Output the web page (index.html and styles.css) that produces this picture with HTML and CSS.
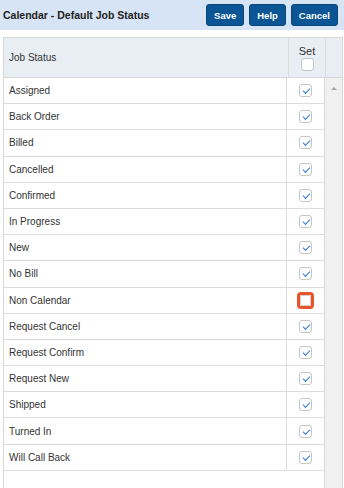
FILE: index.html
```html
<!DOCTYPE html>
<html lang="en">
<head>
    <meta charset="UTF-8">
    <title>Calendar - Default Job Status</title>
    <link rel="stylesheet" href="styles.css">
</head>
<body>

    <div class="toolbar">
        <h1>Calendar - Default Job Status</h1>
        <div class="actions">
            <button class="btn">Save</button>
            <button class="btn">Help</button>
            <button class="btn">Cancel</button>
        </div>
    </div>

    <div class="grid">
        <div class="grid-head">
            <div class="col-name">Job Status</div>
            <div class="col-set">
                <span>Set</span>
                <span class="check"></span>
            </div>
            <div class="col-gutter"></div>
        </div>
        <div class="grid-body">
            <div class="rows">
                <div class="row"><div class="col-name">Assigned</div><div class="col-set"><span class="check on"></span></div></div>
                <div class="row"><div class="col-name">Back Order</div><div class="col-set"><span class="check on"></span></div></div>
                <div class="row"><div class="col-name">Billed</div><div class="col-set"><span class="check on"></span></div></div>
                <div class="row"><div class="col-name">Cancelled</div><div class="col-set"><span class="check on"></span></div></div>
                <div class="row"><div class="col-name">Confirmed</div><div class="col-set"><span class="check on"></span></div></div>
                <div class="row"><div class="col-name">In Progress</div><div class="col-set"><span class="check on"></span></div></div>
                <div class="row"><div class="col-name">New</div><div class="col-set"><span class="check on"></span></div></div>
                <div class="row"><div class="col-name">No Bill</div><div class="col-set"><span class="check on"></span></div></div>
                <div class="row"><div class="col-name">Non Calendar</div><div class="col-set"><span class="check focus"></span></div></div>
                <div class="row"><div class="col-name">Request Cancel</div><div class="col-set"><span class="check on"></span></div></div>
                <div class="row"><div class="col-name">Request Confirm</div><div class="col-set"><span class="check on"></span></div></div>
                <div class="row"><div class="col-name">Request New</div><div class="col-set"><span class="check on"></span></div></div>
                <div class="row"><div class="col-name">Shipped</div><div class="col-set"><span class="check on"></span></div></div>
                <div class="row"><div class="col-name">Turned In</div><div class="col-set"><span class="check on"></span></div></div>
                <div class="row"><div class="col-name">Will Call Back</div><div class="col-set"><span class="check on"></span></div></div>
            </div>
            <div class="scrollbar">
                <span class="arrow-up"></span>
            </div>
        </div>
    </div>

</body>
</html>
```

FILE: styles.css
```css
* {
    margin: 0;
    padding: 0;
    box-sizing: border-box;
}

body {
    font-family: 'Liberation Sans', Arial, sans-serif;
    font-size: 10px;
    color: #333333;
    background-color: #ffffff;
    width: 344px;
    height: 488px;
    overflow: hidden;
}

/* Top bar */
.toolbar {
    height: 30px;
    background-color: #d6e4f5;
    display: flex;
    align-items: center;
    justify-content: space-between;
    padding: 0 6px 0 3px;
}

.toolbar h1 {
    font-size: 10.5px;
    font-weight: bold;
    color: #222222;
}

.actions {
    display: flex;
    gap: 5px;
}

.btn {
    height: 22px;
    padding: 0 7px;
    font-family: 'Liberation Sans', Arial, sans-serif;
    font-size: 9.5px;
    font-weight: bold;
    color: #ffffff;
    background-color: #0b5594;
    border: 1px solid #08467c;
    border-radius: 3px;
}

/* Grid */
.grid {
    margin: 7px 1px 0 3px;
    border: 1px solid #d8d8d8;
    border-bottom: none;
    height: 451px;
    display: flex;
    flex-direction: column;
}

.grid-head {
    height: 40px;
    display: flex;
    background-color: #e9eef4;
    border-bottom: 1px solid #d4d8dd;
}

.col-name {
    flex: 1;
    display: flex;
    align-items: center;
    padding-left: 5px;
    border-right: 1px solid #dcdcdc;
}

.col-set {
    width: 37px;
    display: flex;
    flex-direction: column;
    align-items: center;
    justify-content: center;
}

.grid-head .col-set {
    gap: 1px;
    padding-top: 1px;
    font-size: 11px;
    border-right: 1px solid #dcdcdc;
}

.col-gutter {
    width: 16px;
}

.grid-body {
    flex: 1;
    display: flex;
}

.rows {
    flex: 1;
    border-right: 1px solid #d8d8d8;
}

.row {
    height: 26.2px;
    display: flex;
    border-bottom: 1px solid #dcdcdc;
}

/* Checkboxes */
.check {
    width: 13px;
    height: 13px;
    border: 1px solid #c6c6c6;
    border-radius: 3px;
    background-color: #ffffff;
    position: relative;
}

.check.on::after {
    content: '';
    position: absolute;
    top: 3px;
    left: 2.5px;
    width: 6px;
    height: 3px;
    border-left: 1.5px solid #2f7bd6;
    border-bottom: 1.5px solid #2f7bd6;
    transform: rotate(-45deg);
}

.check.focus {
    width: 17px;
    height: 17px;
    border: 3px solid #e8542c;
    border-radius: 4px;
}

.check.focus::after {
    content: '';
    position: absolute;
    inset: 0;
    border: 1px solid #d0d0d0;
    border-radius: 2px;
}

/* Scrollbar */
.scrollbar {
    width: 17px;
    background-color: #f0f0f0;
    position: relative;
}

.arrow-up {
    position: absolute;
    top: 9px;
    left: 6px;
    width: 0;
    height: 0;
    border-left: 3px solid transparent;
    border-right: 3px solid transparent;
    border-bottom: 3px solid #a3a3a3;
}
```
